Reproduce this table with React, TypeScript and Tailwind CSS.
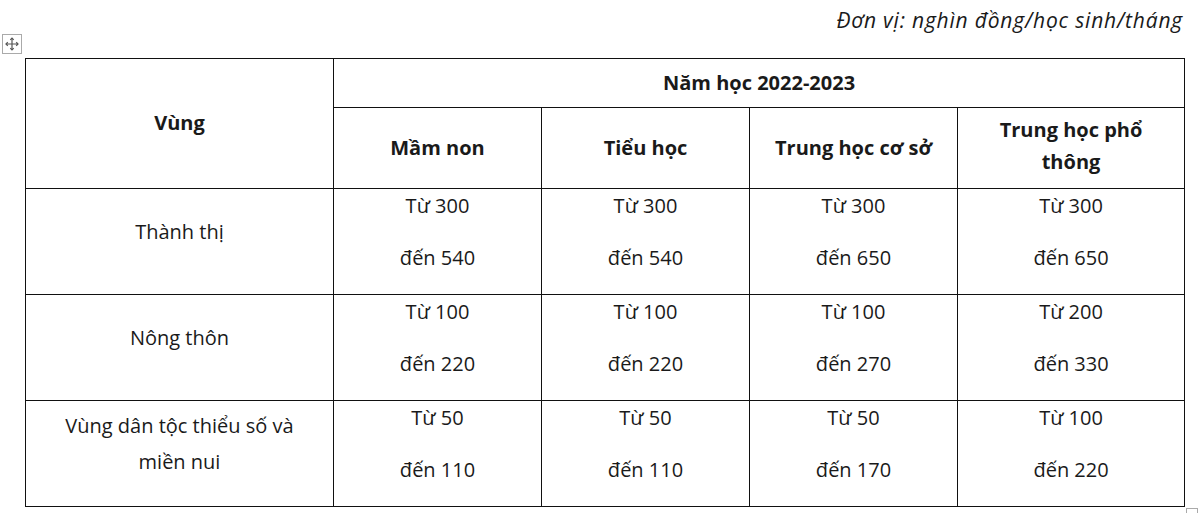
import React from "react";

const rows = [
  { name: ["Thành thị"], vals: [["Từ 300", "đến 540"], ["Từ 300", "đến 540"], ["Từ 300", "đến 650"], ["Từ 300", "đến 650"]] },
  { name: ["Nông thôn"], vals: [["Từ 100", "đến 220"], ["Từ 100", "đến 220"], ["Từ 100", "đến 270"], ["Từ 200", "đến 330"]] },
  { name: ["Vùng dân tộc thiểu số và", "miền nui"], vals: [["Từ 50", "đến 110"], ["Từ 50", "đến 110"], ["Từ 50", "đến 170"], ["Từ 100", "đến 220"]] },
];

function MoveIcon() {
  return (
    <svg width="14" height="14" viewBox="0 0 14 14" fill="none">
      <path d="M7 1v12M1 7h12" stroke="#555" strokeWidth="1.2" />
      <path d="M5.3 2.8L7 1l1.7 1.8M5.3 11.2L7 13l1.7-1.8M2.8 5.3L1 7l1.8 1.7M11.2 5.3L13 7l-1.8 1.7" stroke="#555" strokeWidth="1.2" fill="none" />
    </svg>
  );
}

export default function App() {
  const bd = "border-[1.5px] border-[#111]";
  return (
    <div className="relative w-[1200px] h-[513px] bg-white overflow-hidden text-[#1a1a1a]" style={{ fontFamily: "'Open Sans', 'Noto Sans', sans-serif" }}>
      <div className="h-[40px] flex items-center justify-end pr-[17px] pt-[1px]">
        <span className="italic text-[21px] tracking-[0.8px] text-[#1a1a1a]">Đơn vị: nghìn đồng/học sinh/tháng</span>
      </div>
      <div className="absolute left-[2px] top-[34px] w-[20px] h-[20px] border border-[#aaa] bg-white flex items-center justify-center">
        <MoveIcon />
      </div>
      <div className="pl-[25px] pt-[18px]">
        <table className="table-fixed border-collapse w-[1159px] text-[20px]">
          <colgroup>
            <col className="w-[308px]" />
            <col className="w-[208px]" />
            <col className="w-[208px]" />
            <col className="w-[208px]" />
            <col className="w-[227px]" />
          </colgroup>
          <tbody>
            <tr className="h-[49px]">
              <td rowSpan={2} className={`${bd} text-center align-middle font-bold pb-[2px]`}>Vùng</td>
              <td colSpan={4} className={`${bd} text-center align-middle font-bold`}>Năm học 2022-2023</td>
            </tr>
            <tr className="h-[81px]">
              <td className={`${bd} text-center align-middle font-bold`}>Mầm non</td>
              <td className={`${bd} text-center align-middle font-bold`}>Tiểu học</td>
              <td className={`${bd} text-center align-middle font-bold`}>Trung học cơ sở</td>
              <td className={`${bd} text-center align-middle font-bold leading-[32px] pb-[4px]`}>
                Trung học phổ
                <br />
                thông
              </td>
            </tr>
            {rows.map((r, i) => (
              <tr key={i} className="h-[106px]">
                <td className={`${bd} text-center align-middle leading-[36px] pb-[20px]`}>
                  {r.name.map((n, j) => (
                    <div key={j}>{n}</div>
                  ))}
                </td>
                {r.vals.map((v, j) => (
                  <td key={j} className={`${bd} text-center align-top pt-[1px]`}>
                    <div className="flex flex-col gap-[20px] leading-[32px]">
                      <div>{v[0]}</div>
                      <div>{v[1]}</div>
                    </div>
                  </td>
                ))}
              </tr>
            ))}
          </tbody>
        </table>
      </div>
      <div className="absolute left-[1186px] top-[508px] w-[12px] h-[12px] border border-[#aaa] bg-white" />
    </div>
  );
}
